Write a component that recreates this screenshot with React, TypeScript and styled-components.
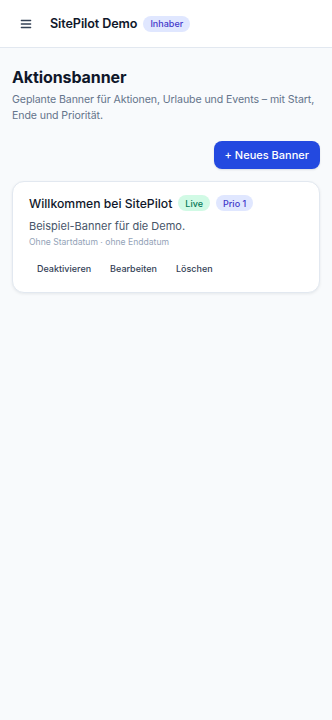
import { FunctionComponent } from 'react';
import styled, { createGlobalStyle } from 'styled-components';

const GlobalStyle = createGlobalStyle`
    html, body {
        margin: 0;
        padding: 0;
        background: #f8fafc;
    }
    body {
        font-family: Inter, 'Noto Sans', sans-serif;
        color: #0f172a;
        -webkit-font-smoothing: antialiased;
    }
    * {
        box-sizing: border-box;
    }
`;

const MenuIcon = () => (
    <svg width="14" height="14" viewBox="0 0 24 24" fill="none" stroke="#334155" strokeWidth="2.2" strokeLinecap="round">
        <path d="M4 6h16M4 12h16M4 18h16" />
    </svg>
);

const App: FunctionComponent = () => {
    return (
        <Page>
            <GlobalStyle />
            <Header>
                <MenuButton aria-label="Menü">
                    <MenuIcon />
                </MenuButton>
                <Brand>SitePilot Demo</Brand>
                <Pill $tone="indigo">Inhaber</Pill>
            </Header>

            <Main>
                <Title>Aktionsbanner</Title>
                <Lead>
                    Geplante Banner für Aktionen, Urlaube und Events – mit Start, Ende und Priorität.
                </Lead>

                <Toolbar>
                    <PrimaryButton>+ Neues Banner</PrimaryButton>
                </Toolbar>

                <Card>
                    <CardHead>
                        <CardTitle>Willkommen bei SitePilot</CardTitle>
                        <Pill $tone="green">Live</Pill>
                        <Pill $tone="indigo">Prio 1</Pill>
                    </CardHead>
                    <CardText>Beispiel-Banner für die Demo.</CardText>
                    <CardMeta>Ohne Startdatum · ohne Enddatum</CardMeta>
                    <Actions>
                        <GhostButton>Deaktivieren</GhostButton>
                        <GhostButton>Bearbeiten</GhostButton>
                        <GhostButton>Löschen</GhostButton>
                    </Actions>
                </Card>
            </Main>
        </Page>
    );
};

export default App;

const Page = styled.div`
    min-height: 720px;
    background: #f8fafc;
`;

const Header = styled.header`
    height: 48px;
    background: #ffffff;
    border-bottom: 1px solid #e2e8f0;
    display: flex;
    align-items: center;
    padding: 0 12px;
`;

const MenuButton = styled.button`
    width: 28px;
    height: 28px;
    border: none;
    background: transparent;
    padding: 0;
    display: flex;
    align-items: center;
    justify-content: center;
    margin-right: 10px;
    cursor: pointer;
`;

const Brand = styled.span`
    font-size: 12.6px;
    font-weight: 600;
    color: #0f172a;
    margin-right: 6px;
    letter-spacing: -0.1px;
`;

const TONES = {
    indigo: { bg: '#e0e7ff', fg: '#4338ca' },
    green: { bg: '#d1fae5', fg: '#047857' },
};

const Pill = styled.span<{ $tone: 'indigo' | 'green' }>`
    display: inline-flex;
    align-items: center;
    height: 16px;
    padding: 0 7px;
    border-radius: 999px;
    font-size: 9px;
    font-weight: 500;
    background: ${({ $tone }) => TONES[$tone].bg};
    color: ${({ $tone }) => TONES[$tone].fg};
`;

const Main = styled.main`
    padding: 18px 12px;
`;

const Title = styled.h1`
    margin: 0;
    font-size: 16px;
    line-height: 22px;
    font-weight: 700;
    color: #0f172a;
    letter-spacing: -0.1px;
`;

const Lead = styled.p`
    margin: 4px 0 0;
    font-size: 10.6px;
    line-height: 16px;
    letter-spacing: -0.1px;
    color: #64748b;
`;

const Toolbar = styled.div`
    display: flex;
    justify-content: flex-end;
    margin-top: 17px;
`;

const PrimaryButton = styled.button`
    height: 28px;
    padding: 0 11px;
    border: none;
    border-radius: 8px;
    background: #2349e0;
    color: #ffffff;
    font-family: inherit;
    font-size: 11px;
    font-weight: 500;
    box-shadow: 0 1px 2px rgba(15, 23, 42, 0.12);
    cursor: pointer;
`;

const Card = styled.section`
    margin-top: 12px;
    background: #ffffff;
    border: 1px solid #e2e8f0;
    border-radius: 12px;
    box-shadow: 0 1px 3px rgba(15, 23, 42, 0.08);
    padding: 13px 16px 12px;
`;

const CardHead = styled.div`
    display: flex;
    align-items: center;
    gap: 6px;
`;

const CardTitle = styled.h2`
    margin: 0;
    font-size: 12.2px;
    font-weight: 500;
    color: #0f172a;
`;

const CardText = styled.p`
    margin: 7px 0 0;
    font-size: 11px;
    line-height: 16px;
    color: #475569;
`;

const CardMeta = styled.p`
    margin: 2px 0 0;
    font-size: 8.6px;
    line-height: 13px;
    color: #94a3b8;
`;

const Actions = styled.div`
    display: flex;
    gap: 3px;
    margin-top: 7px;
`;

const GhostButton = styled.button`
    height: 24px;
    padding: 0 8px;
    border: none;
    border-radius: 6px;
    background: transparent;
    font-family: inherit;
    font-size: 9px;
    font-weight: 500;
    color: #334155;
    cursor: pointer;
`;
